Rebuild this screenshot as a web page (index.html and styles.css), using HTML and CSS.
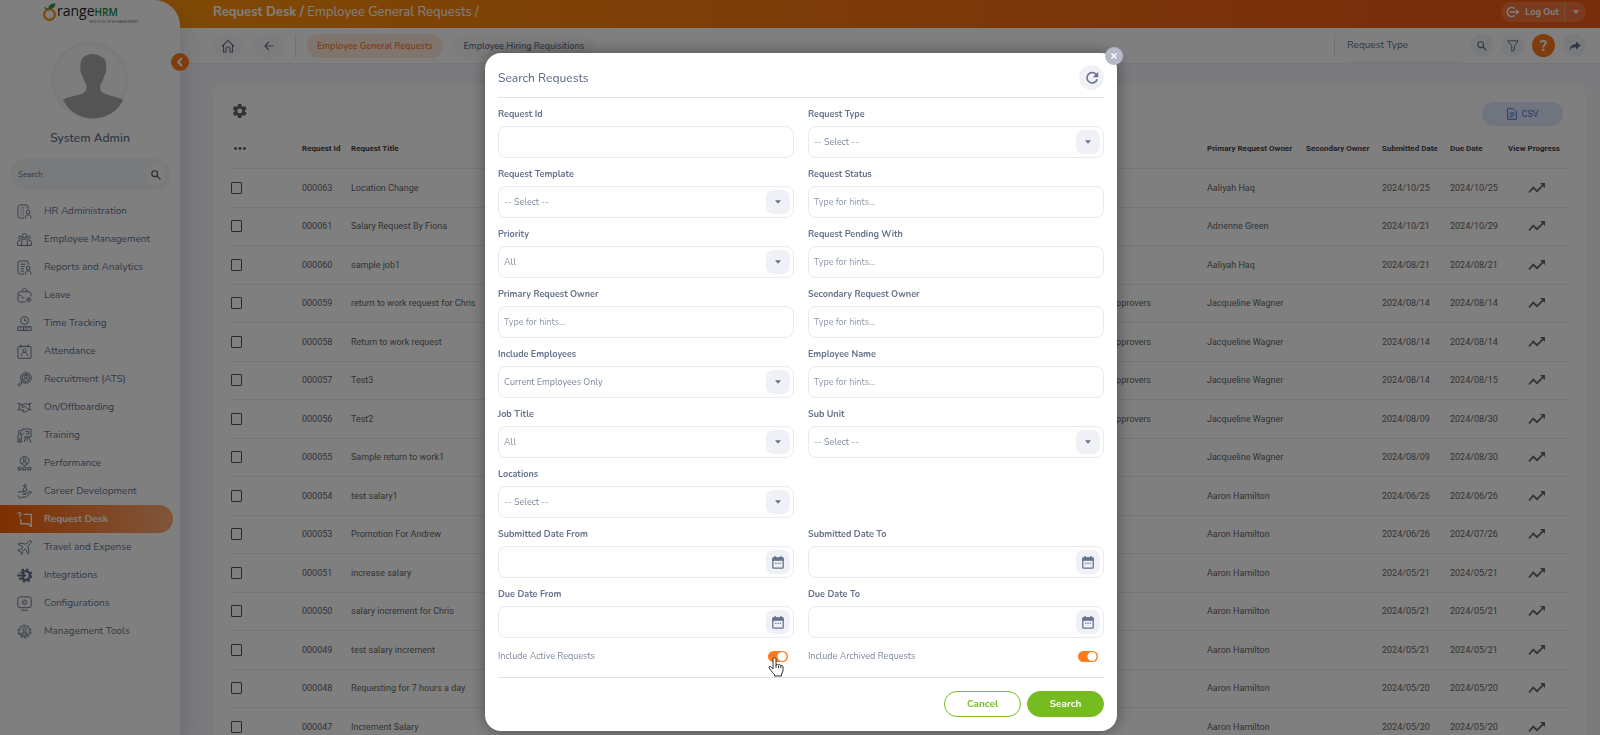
FILE: index.html
```html
<!DOCTYPE html>
<html lang="en">
<head>
<meta charset="utf-8">
<title>Request Desk - Employee General Requests</title>
<link rel="stylesheet" href="styles.css">
</head>
<body>
<svg class="defs" aria-hidden="true">
  <symbol id="trend" viewBox="0 0 18 12"><path d="M1 10.5 5.2 5.6 9 9.2 15.500 2.600" fill="none" stroke="currentColor" stroke-width="1.700"/><path d="M12 1h5v5l-1.600-1.600-1.800-1.800z" fill="currentColor"/></symbol>
  <symbol id="caret" viewBox="0 0 6 4"><path d="M0 .3h6L3 3.700z" fill="currentColor"/></symbol>
  <symbol id="search" viewBox="0 0 10 10"><circle cx="3.700" cy="3.700" r="2.900" fill="none" stroke="currentColor" stroke-width="1.100"/><path d="M5.900 5.900 9.400 9.400" stroke="currentColor" stroke-width="1.300"/></symbol>
  <symbol id="calendar" viewBox="0 0 12 13"><path d="M3 0v3M9 0v3" stroke="currentColor" stroke-width="1.400"/><rect x=".8" y="1.900" width="10.400" height="10.300" rx="1" fill="none" stroke="currentColor" stroke-width="1.300"/><path d="M.5 1.500h11v3.300H.5z" fill="currentColor"/><path d="M3 7.200h1.500M5.300 7.200h1.500M7.600 7.200h1.500" stroke="currentColor" stroke-width="1.100"/></symbol>
</svg>

<div class="app">
  <aside class="sidebar">
    <a class="logo" href="#" aria-label="OrangeHRM">
      <svg class="logo-mark" viewBox="0 0 15 18" aria-hidden="true"><circle cx="7.500" cy="11.500" r="5.400" fill="none" stroke="#ff8f0a" stroke-width="2.200"/><path d="M6.500 6.500C6 2 9 .5 13.500.3 13.500 4 11 6 6.500 6.500z" fill="#2f9e41"/><path d="M6.800 6.500C5.500 5.500 3.500 4.200 2 4c.7 2 2.500 2.700 4.800 2.500z" fill="#2f9e41"/></svg>
      <span class="logo-words"><span class="logo-name">range<b>HRM</b></span><span class="logo-tag">NEW LEVEL OF HR MANAGEMENT</span></span>
    </a>
    <div class="avatar"><svg viewBox="0 0 60 66" aria-hidden="true"><path d="M30 1C21 1 17 6 17.500 14c-1 2 .2 6 1.700 8 .8 4 2.500 7 4.300 10 .7 4-1 7-4 8.500C13 43 4 44 0 46.500 5 58 17 65.500 30 65.500S55 58 60 47c-4-3-14-4-19.500-7-3-1.500-4-4-3-8.500 2-3 3.500-6 4-9.500 1.500-2 2.500-6 1.500-8C43.500 8 42 5 38.500 4 36 2 33 1 30 1z" fill="#a8a8a8"/></svg></div>
    <div class="user-name">System Admin</div>
    <form class="side-search">
      <input type="text" placeholder="Search" aria-label="Search menu">
      <button type="button" aria-label="Search"><svg class="i10"><use href="#search"/></svg></button>
    </form>
    <nav class="menu">
      <a href="#"><svg viewBox="0 0 16 16"><path d="M7.500 15H3.500Q1 15 1 12.500v-9Q1 1 3.500 1h6Q12 1 12 3.500V5"/><path d="M4 4h1M6.500 4h1M9 4h1M4 6.500h1M6.500 6.500h1M4 9h1M6.500 9h1M4 11.500h1M6.500 11.500h1"/><circle cx="12" cy="8.500" r="2"/><path d="M9 15.500c0-3 1-4 3-4s3 1 3 4"/></svg>HR Administration</a>
      <a href="#"><svg viewBox="0 0 16 16"><circle cx="8" cy="4" r="2.200"/><circle cx="3.500" cy="6" r="1.700"/><circle cx="12.500" cy="6" r="1.700"/><path d="M5 14.500V9.500Q5 7.500 8 7.500t3 2v5M.7 14.500V10.500Q.7 9 3.500 9M15.300 14.500V10.500Q15.300 9 12.500 9M.7 14.300h14.600"/></svg>Employee Management</a>
      <a href="#"><svg viewBox="0 0 16 16"><path d="M7.500 15H3.500Q1 15 1 12.500v-9Q1 1 3.500 1h6Q12 1 12 3.500V5M4 4.500h5M4 7h4M4 9.500h3.500M4 12h3"/><circle cx="12" cy="8.500" r="2"/><path d="M9 15.500c0-3 1-4 3-4s3 1 3 4"/></svg>Reports and Analytics</a>
      <a href="#"><svg viewBox="0 0 16 16"><path d="M9 15H3.500Q1 15 1 12.500v-6Q1 4 3.500 4h9Q15 4 15 6.500V9M5.500 3.500C5.500 1 6.500.7 8 .7s2.500.3 2.500 2.800M2 7l2.500 1.500M4.500 9.500q1.500 2 3.500.5"/><circle cx="12.500" cy="12.500" r="2.300" stroke-dasharray="1.600 .5"/><circle cx="12.500" cy="12.500" r="1.200"/></svg>Leave</a>
      <a href="#"><svg viewBox="0 0 16 16"><circle cx="8" cy="4.800" r="4.200"/><path d="M8 2.500V5h2M.8 11.500h14.400v4H.8zM4 11.500v2M7 11.500v4M9.500 11.500v4M12.500 11.500v2"/></svg>Time Tracking</a>
      <a href="#"><svg viewBox="0 0 16 16"><rect x="1" y="2.500" width="14" height="12.800" rx="1"/><path d="M4 .5v3.500M12 .5v3.500M7 2.500h2M4.500 13c0-3 1.500-4 3.500-4s3.500 1 3.500 4"/><circle cx="8" cy="7" r="1.800"/></svg>Attendance</a>
      <a href="#"><svg viewBox="0 0 16 16"><circle cx="9.500" cy="6.300" r="5.700"/><circle cx="9.500" cy="6.300" r="4"/><circle cx="9.500" cy="5" r="1.500"/><path d="M6.800 9q.5-2 2.700-2t2.700 2M5 10l1 1L2.500 15.200.8 13.800z"/></svg>Recruitment (ATS)</a>
      <a href="#"><svg viewBox="0 0 16 16"><path d="M.5 3.500h2v7h-2M15.500 3.500h-2v7h2M2.500 4.500 6 5l2-1 3 .5 2.500-.5M6.500 5 5 7.500q1.500 1 3-.8L12 10M2.500 9.500 7.500 13q1 .5 1.500-.5l2-.7 2.500-2.300M6 10l2 1.500"/></svg>On/Offboarding</a>
      <a href="#"><svg viewBox="0 0 16 16"><path d="M6 3V1h9v8.500H7.500M8.500 3.500h4v3h-3M9.500 9.500 7.500 15M12.500 9.500l2.500 6M11 9.500V14"/><circle cx="3" cy="4" r="1.700"/><path d="M1 15V8q0-1.500 2-1.500L6 7l2-2M4.700 8v7H3v-4M.8 15h2"/></svg>Training</a>
      <a href="#"><svg viewBox="0 0 16 16"><circle cx="8" cy="5.300" r="4.700"/><circle cx="8" cy="4" r="1.500"/><path d="M5.500 8.500q.3-2.300 2.500-2.300t2.500 2.300M2.800 11.300l.7 1.200 1.500.2-1 1 .2 1.600-1.400-.7-1.400.7.200-1.600-1-1 1.500-.2zM8 11.300l.7 1.200 1.500.2-1 1 .2 1.600L8 14.600l-1.400.7.2-1.600-1-1 1.500-.2zM13.200 11.300l.7 1.200 1.500.2-1 1 .2 1.600-1.400-.7-1.400.7.200-1.600-1-1 1.500-.2z"/></svg>Performance</a>
      <a href="#"><svg viewBox="0 0 16 16"><circle cx="8.500" cy="2" r="1.400"/><path d="M6.500 7.500c0-3 .5-3.500 2-3.500s2 .5 2 3.500zM.7 8.500h2L5 8l4 2v1H6M9 10.500l5-2.500q1.500-.3 1.300 1L10 13.500q-2 1-5 .5l-2 1.300L.7 12"/></svg>Career Development</a>
      <a href="#" class="active" aria-current="page"><svg viewBox="0 0 16 16"><path d="M7 2.500h8.300v13L12 12.500H4V8" stroke-width="1.500"/><path d="M1 2Q1 .7 2.700.7T4.300 2.200Q4.300 3 3 3.800v1.400M3 6.300v1.200" stroke-width="1.300"/></svg>Request Desk</a>
      <a href="#"><svg viewBox="0 0 16 16"><path d="M15 1q-1.500-.7-3 .8L9.500 4.500 2.500 3 1 4.300l5.500 3.200L4 10.300 1.500 10l-1 1 3 1.500 1.500 3 1-1-.3-2.500L8.500 9.500l3.200 5.500L13 13.500 11.500 6.500 14.200 4Q15.700 2.500 15 1z"/></svg>Travel and Expense</a>
      <a href="#"><svg viewBox="0 0 16 16"><circle cx="9" cy="8" r="4.700" stroke-width="2.600"/><circle cx="9" cy="8" r="6.600" stroke-width="2" stroke-dasharray="2.600 2.584"/><path d="M0 8h7.500" stroke="#fff" stroke-width="4.500"/><path d="M0 8h8M5.500 5 8.500 8l-3 3" stroke-width="2"/></svg>Integrations</a>
      <a href="#"><svg viewBox="0 0 16 16"><rect x=".8" y="1" width="14.400" height="11.500" rx="2.500"/><path d="M4.500 15.200h7"/><circle cx="8" cy="6.800" r="1.800"/><circle cx="8" cy="6.800" r="2.800" stroke-dasharray="1.200 1.732"/></svg>Configurations</a>
      <a href="#"><svg viewBox="0 0 16 16"><circle cx="8" cy="8" r="7" stroke-dasharray="3 1.400"/><circle cx="8" cy="8" r="5.500"/><circle cx="8" cy="6.500" r="1.800"/><path d="M4.500 11.500q0-2.500 3.500-2.500t3.500 2.500z"/></svg>Management Tools</a>
    </nav>
    <button class="collapse" type="button" aria-label="Collapse menu"><svg viewBox="0 0 8 10" aria-hidden="true"><path d="M5.800 1 2.200 5l3.600 4" fill="none" stroke="#fff" stroke-width="2"/></svg></button>
  </aside>

  <div class="main">
    <header class="topbar">
      <h1><b>Request Desk /</b> Employee General Requests /</h1>
      <div class="logout">
        <button type="button" class="logout-main"><svg viewBox="0 0 15 12" aria-hidden="true"><path d="M9.700 2.600A4.500 4.500 0 1 0 9.700 9.400M4.500 6h8" fill="none" stroke="#fff" stroke-width="1.600"/><path d="M11 3l3.500 3L11 9z" fill="#fff"/></svg>Log Out</button>
        <button type="button" class="logout-more" aria-label="More"><svg class="caret"><use href="#caret"/></svg></button>
      </div>
    </header>

    <div class="toolbar">
      <button type="button" class="pill" aria-label="Home"><svg class="i14" viewBox="0 0 14 14" aria-hidden="true"><path d="M1 7.500 7 1.200l6 6.300M2.500 6.500V13H5V9.500Q5 8 7 8t2 1.500V13h2.500V6.500" fill="none" stroke="currentColor" stroke-width="1.100"/></svg></button>
      <button type="button" class="pill" aria-label="Back"><svg class="i10" viewBox="0 0 10 10" aria-hidden="true"><path d="M9.500 5H1M4.800 1 1 5l3.800 4" fill="none" stroke="currentColor" stroke-width="1.200"/></svg></button>
      <span class="rule"></span>
      <a href="#" class="tab current">Employee General Requests</a>
      <a href="#" class="tab">Employee Hiring Requisitions</a>
      <div class="tools">
        <span class="rule"></span>
        <input class="quick" type="text" placeholder="Request Type" aria-label="Request Type quick filter">
        <button type="button" class="round" aria-label="Search"><svg class="i10"><use href="#search"/></svg></button>
        <button type="button" class="round" aria-label="Filter"><svg class="i12" viewBox="0 0 12 12" aria-hidden="true"><path d="M.8.8h10.400L7.500 5.800V10L4.800 11.500V5.800z" fill="none" stroke="currentColor"/></svg></button>
        <button type="button" class="round help" aria-label="Help">?</button>
        <button type="button" class="round" aria-label="Share"><svg class="i12" viewBox="0 0 12 12" aria-hidden="true"><path d="M7 1.500 11.700 5.500 7 9.500V7.200Q2.500 7 .5 10.500.8 4.500 7 4z" fill="currentColor"/></svg></button>
      </div>
    </div>

    <section class="card">
      <div class="card-head">
        <button type="button" class="gear" aria-label="Table settings"><svg viewBox="0 0 24 24" aria-hidden="true"><path d="M19.400 13a7.500 7.500 0 0 0 0-2l2.300-1.700a.6.6 0 0 0 .1-.7l-2.100-3.700a.6.6 0 0 0-.7-.2l-2.600 1a8 8 0 0 0-1.800-1L14.200 1.900a.6.6 0 0 0-.5-.4H9.500a.6.6 0 0 0-.5.4l-.4 2.800a8 8 0 0 0-1.800 1l-2.600-1a.6.6 0 0 0-.7.200L1.400 8.600a.5.5 0 0 0 .1.700L3.800 11a7.500 7.500 0 0 0 0 2l-2.300 1.700a.6.6 0 0 0-.1.700l2.100 3.700c.1.200.4.300.7.200l2.600-1a8 8 0 0 0 1.800 1l.4 2.800c0 .2.200.4.500.4h4.200c.3 0 .5-.2.500-.4l.4-2.800a8 8 0 0 0 1.800-1l2.600 1c.3.100.5 0 .7-.2l2.100-3.700a.5.5 0 0 0-.1-.7zM11.600 15.600a3.600 3.600 0 1 1 0-7.200 3.600 3.600 0 0 1 0 7.200z" fill="currentColor"/></svg></button>
        <button type="button" class="csv"><svg viewBox="0 0 10 12" aria-hidden="true"><path d="M.6.6h5.700l3 3v7.800H.6zM2.500 5h5M2.500 7h5M2.500 9h3.500" fill="none" stroke="currentColor"/></svg>CSV</button>
      </div>
      <table>
        <colgroup><col class="c-check"><col class="c-id"><col class="c-title"><col><col class="c-owner"><col class="c-second"><col class="c-sub"><col class="c-due"><col class="c-view"></colgroup>
        <thead><tr><th><svg class="dots" viewBox="0 0 12 3" aria-label="Options"><circle cx="1.500" cy="1.500" r="1.400"/><circle cx="6" cy="1.500" r="1.400"/><circle cx="10.500" cy="1.500" r="1.400"/></svg></th><th>Request Id</th><th>Request Title</th><th></th><th>Primary Request Owner</th><th>Secondary Owner</th><th>Submitted Date</th><th>Due Date</th><th>View Progress</th></tr></thead>
        <tbody>
          <tr><td><input type="checkbox" aria-label="Select 000063"></td><td>000063</td><td>Location Change</td><td></td><td>Aaliyah Haq</td><td></td><td>2024/10/25</td><td>2024/10/25</td><td><svg class="trend"><use href="#trend"/></svg></td></tr>
          <tr><td><input type="checkbox" aria-label="Select 000061"></td><td>000061</td><td>Salary Request By Fiona</td><td></td><td>Adrienne Green</td><td></td><td>2024/10/21</td><td>2024/10/29</td><td><svg class="trend"><use href="#trend"/></svg></td></tr>
          <tr><td><input type="checkbox" aria-label="Select 000060"></td><td>000060</td><td>sample job1</td><td></td><td>Aaliyah Haq</td><td></td><td>2024/08/21</td><td>2024/08/21</td><td><svg class="trend"><use href="#trend"/></svg></td></tr>
          <tr><td><input type="checkbox" aria-label="Select 000059"></td><td>000059</td><td>return to work request for Chris</td><td>Approvers</td><td>Jacqueline Wagner</td><td></td><td>2024/08/14</td><td>2024/08/14</td><td><svg class="trend"><use href="#trend"/></svg></td></tr>
          <tr><td><input type="checkbox" aria-label="Select 000058"></td><td>000058</td><td>Return to work request</td><td>Approvers</td><td>Jacqueline Wagner</td><td></td><td>2024/08/14</td><td>2024/08/14</td><td><svg class="trend"><use href="#trend"/></svg></td></tr>
          <tr><td><input type="checkbox" aria-label="Select 000057"></td><td>000057</td><td>Test3</td><td>Approvers</td><td>Jacqueline Wagner</td><td></td><td>2024/08/14</td><td>2024/08/15</td><td><svg class="trend"><use href="#trend"/></svg></td></tr>
          <tr><td><input type="checkbox" aria-label="Select 000056"></td><td>000056</td><td>Test2</td><td>Approvers</td><td>Jacqueline Wagner</td><td></td><td>2024/08/09</td><td>2024/08/30</td><td><svg class="trend"><use href="#trend"/></svg></td></tr>
          <tr><td><input type="checkbox" aria-label="Select 000055"></td><td>000055</td><td>Sample return to work1</td><td></td><td>Jacqueline Wagner</td><td></td><td>2024/08/09</td><td>2024/08/30</td><td><svg class="trend"><use href="#trend"/></svg></td></tr>
          <tr><td><input type="checkbox" aria-label="Select 000054"></td><td>000054</td><td>test salary1</td><td></td><td>Aaron Hamilton</td><td></td><td>2024/06/26</td><td>2024/06/26</td><td><svg class="trend"><use href="#trend"/></svg></td></tr>
          <tr><td><input type="checkbox" aria-label="Select 000053"></td><td>000053</td><td>Promotion For Andrew</td><td></td><td>Aaron Hamilton</td><td></td><td>2024/06/26</td><td>2024/07/26</td><td><svg class="trend"><use href="#trend"/></svg></td></tr>
          <tr><td><input type="checkbox" aria-label="Select 000051"></td><td>000051</td><td>increase salary</td><td></td><td>Aaron Hamilton</td><td></td><td>2024/05/21</td><td>2024/05/21</td><td><svg class="trend"><use href="#trend"/></svg></td></tr>
          <tr><td><input type="checkbox" aria-label="Select 000050"></td><td>000050</td><td>salary increment for Chris</td><td></td><td>Aaron Hamilton</td><td></td><td>2024/05/21</td><td>2024/05/21</td><td><svg class="trend"><use href="#trend"/></svg></td></tr>
          <tr><td><input type="checkbox" aria-label="Select 000049"></td><td>000049</td><td>test salary increment</td><td></td><td>Aaron Hamilton</td><td></td><td>2024/05/21</td><td>2024/05/21</td><td><svg class="trend"><use href="#trend"/></svg></td></tr>
          <tr><td><input type="checkbox" aria-label="Select 000048"></td><td>000048</td><td>Requesting for 7 hours a day</td><td></td><td>Aaron Hamilton</td><td></td><td>2024/05/20</td><td>2024/05/20</td><td><svg class="trend"><use href="#trend"/></svg></td></tr>
          <tr><td><input type="checkbox" aria-label="Select 000047"></td><td>000047</td><td>Increment Salary</td><td></td><td>Aaron Hamilton</td><td></td><td>2024/05/20</td><td>2024/05/20</td><td><svg class="trend"><use href="#trend"/></svg></td></tr>
        </tbody>
      </table>
    </section>
  </div>
</div>

<div class="overlay">
  <form class="dialog" role="dialog" aria-labelledby="dialog-title">
    <button type="button" class="close" aria-label="Close"><svg viewBox="0 0 6 6" aria-hidden="true"><path d="M.5.5l5 5M5.500.5l-5 5" stroke="#fff" stroke-width="1.400"/></svg></button>
    <div class="dialog-head">
      <h2 id="dialog-title">Search Requests</h2>
      <button type="button" class="reset" aria-label="Reset"><svg viewBox="0 0 14 14" aria-hidden="true"><path d="M11.200 3.400A5.200 5.200 0 1 0 12.200 8.200" fill="none" stroke="currentColor" stroke-width="1.600"/><path d="M13.200.8v5.400H7.800z" fill="currentColor"/></svg></button>
    </div>
    <div class="fields">
      <div class="field"><label for="rid">Request Id</label><div class="control"><input id="rid" type="text"></div></div>
      <div class="field"><label for="rtype">Request Type</label><div class="control"><select id="rtype"><option>-- Select --</option></select><span class="tile"><svg class="caret"><use href="#caret"/></svg></span></div></div>
      <div class="field"><label for="rtemplate">Request Template</label><div class="control"><select id="rtemplate"><option>-- Select --</option></select><span class="tile"><svg class="caret"><use href="#caret"/></svg></span></div></div>
      <div class="field"><label for="rstatus">Request Status</label><div class="control"><input id="rstatus" type="text" placeholder="Type for hints..."></div></div>
      <div class="field"><label for="priority">Priority</label><div class="control"><select id="priority"><option>All</option></select><span class="tile"><svg class="caret"><use href="#caret"/></svg></span></div></div>
      <div class="field"><label for="pending">Request Pending With</label><div class="control"><input id="pending" type="text" placeholder="Type for hints..."></div></div>
      <div class="field"><label for="powner">Primary Request Owner</label><div class="control"><input id="powner" type="text" placeholder="Type for hints..."></div></div>
      <div class="field"><label for="sowner">Secondary Request Owner</label><div class="control"><input id="sowner" type="text" placeholder="Type for hints..."></div></div>
      <div class="field"><label for="include">Include Employees</label><div class="control"><select id="include"><option>Current Employees Only</option></select><span class="tile"><svg class="caret"><use href="#caret"/></svg></span></div></div>
      <div class="field"><label for="ename">Employee Name</label><div class="control"><input id="ename" type="text" placeholder="Type for hints..."></div></div>
      <div class="field"><label for="job">Job Title</label><div class="control"><select id="job"><option>All</option></select><span class="tile"><svg class="caret"><use href="#caret"/></svg></span></div></div>
      <div class="field"><label for="unit">Sub Unit</label><div class="control"><select id="unit"><option>-- Select --</option></select><span class="tile"><svg class="caret"><use href="#caret"/></svg></span></div></div>
      <div class="field first"><label for="loc">Locations</label><div class="control"><select id="loc"><option>-- Select --</option></select><span class="tile"><svg class="caret"><use href="#caret"/></svg></span></div></div>
      <div class="field first"><label for="sfrom">Submitted Date From</label><div class="control"><input id="sfrom" type="text"><button type="button" class="tile" aria-label="Pick date"><svg class="cal"><use href="#calendar"/></svg></button></div></div>
      <div class="field"><label for="sto">Submitted Date To</label><div class="control"><input id="sto" type="text"><button type="button" class="tile" aria-label="Pick date"><svg class="cal"><use href="#calendar"/></svg></button></div></div>
      <div class="field"><label for="dfrom">Due Date From</label><div class="control"><input id="dfrom" type="text"><button type="button" class="tile" aria-label="Pick date"><svg class="cal"><use href="#calendar"/></svg></button></div></div>
      <div class="field"><label for="dto">Due Date To</label><div class="control"><input id="dto" type="text"><button type="button" class="tile" aria-label="Pick date"><svg class="cal"><use href="#calendar"/></svg></button></div></div>
      <div class="toggle"><label for="active">Include Active Requests</label><input id="active" type="checkbox" checked>
        <svg class="pointer" viewBox="0 0 16 20" aria-hidden="true"><path d="M5 12V2.200a1.500 1.500 0 0 1 3 0V8q1.200-1.200 2.500 0 1.300-.8 2.300.4 1.900-.5 2.200 1.200V13q0 2-1.500 4v2H6.500v-1.500Q4.500 16 3 13.500L1 10.800Q.8 9.300 2.300 9.500z" fill="#fff" stroke="#333" stroke-width="1"/><path d="M8 8v3M10.500 8.500v2.500M12.800 9v2" stroke="#333"/></svg></div>
      <div class="toggle"><label for="archived">Include Archived Requests</label><input id="archived" type="checkbox" checked></div>
    </div>
    <div class="actions">
      <button type="button" class="btn cancel">Cancel</button>
      <button type="submit" class="btn submit">Search</button>
    </div>
  </form>
</div>
</body>
</html>
```

FILE: styles.css
```css
* { box-sizing: border-box; }
body { margin: 0; height: 100vh; overflow: hidden; background: #f6f6fb; color: #64728c; font-family: "Nunito", "Lato", "Open Sans", sans-serif; font-size: 10px; }
button, input, select { font: inherit; color: inherit; border: 0; padding: 0; margin: 0; background: none; }
button { display: flex; align-items: center; justify-content: center; }
a { color: inherit; text-decoration: none; }
h1, h2 { margin: 0; font-weight: 400; }
.defs { position: absolute; width: 0; height: 0; }
.i10 { width: 10px; height: 10px; }
.i12 { width: 12px; height: 12px; }
.i14 { width: 14px; height: 14px; }
.caret { width: 6px; height: 4px; }

.app { display: flex; height: 100vh; background: linear-gradient(90deg, #ff920b 12%, #f35c17 90%) top / 100% 28px no-repeat; }

/* Sidebar */
.sidebar { position: relative; z-index: 1; flex: 0 0 180px; background: #fff; border-radius: 0 26px 0 0; box-shadow: 4px 8px 24px rgba(70, 70, 100, .16); }
.logo { display: flex; width: 96px; height: 24px; margin: 3px auto 0; }
.logo-mark { width: 15px; height: 18px; }
.logo-words { flex: 1; display: flex; flex-direction: column; align-items: flex-end; }
.logo-name { font: 14px/16px "Open Sans", sans-serif; color: #222; align-self: flex-start; }
.logo-name b { font-size: 10px; font-weight: 600; color: #148a3c; }
.logo-tag { font-size: 3px; line-height: 4px; color: #555; white-space: nowrap; }
.avatar { width: 78px; height: 78px; margin: 14px auto 0; padding: 8px; border: 4px solid #f2f4f8; border-radius: 50%; background: #fbfbfc; display: grid; place-items: center; }
.avatar svg { width: 60px; height: 66px; }
.user-name { margin-top: 10px; font-size: 12px; line-height: 18px; font-weight: 600; text-align: center; }
.side-search { display: flex; align-items: center; height: 31px; margin: 12px 9px 0 10px; padding: 0 5px 0 8px; border-radius: 16px; background: #f2f4f8; font-size: 8px; }
.side-search input { flex: 1; min-width: 0; }
.side-search button { width: 21px; height: 21px; border-radius: 50%; background: #fbfbfc; color: #555; }
.menu { margin: 7px 7px 0 0; }
.menu a { display: flex; align-items: center; gap: 12px; height: 28px; padding-left: 17px; border-radius: 0 14px 14px 0; }
.menu svg { width: 15px; height: 15px; fill: none; stroke: currentColor; stroke-width: 1; }
.menu .active { color: #fff; font-weight: 700; background: linear-gradient(90deg, #ff5f00, #ffac76); }
.collapse { position: absolute; right: -9px; top: 53px; width: 18px; height: 18px; border-radius: 50%; background: #ff7b1d; }
.collapse svg { width: 8px; height: 10px; }

/* Header */
.main { flex: 1; min-width: 0; display: flex; flex-direction: column; }
.topbar { display: flex; flex: none; align-items: center; justify-content: space-between; height: 28px; padding: 0 14px 4px 33px; color: #fff; }
h1 { font-size: 13px; line-height: 18px; }
.logout { display: flex; height: 20px; border-radius: 10px; background: rgba(255, 255, 255, .16); font-size: 9px; font-weight: 700; }
.logout-main { gap: 5px; padding: 0 5px 0 4px; }
.logout-main svg { width: 15px; height: 12px; }
.logout-more { width: 22px; border-left: 1px solid rgba(255, 255, 255, .3); }
.toolbar { display: flex; flex: none; align-items: center; gap: 11px; height: 36px; padding: 0 14px 0 33px; background: #fff; border-bottom: 1px solid #ececf2; }
.pill { width: 30px; height: 24px; border-radius: 12px; background: #f8f8fa; }
.rule { width: 1px; height: 24px; background: #e2e2e6; }
.tab { height: 24px; padding: 0 10px; border-radius: 12px; background: #f8f8fa; font-size: 9px; font-weight: 600; line-height: 24px; }
.tab.current { background: #ffebdc; color: #ff7b1d; }
.tools { display: flex; align-items: center; gap: 8px; margin-left: auto; }
.quick { width: 115px; height: 32px; margin-left: 4px; border-bottom: 1px solid #eee; }
.round { width: 23px; height: 23px; border-radius: 50%; background: #f2f4f8; }
.round.help { background: #ff7b1d; color: #fff; font-size: 16px; font-weight: 700; }

/* Table */
.card { flex: 1; min-height: 0; overflow: hidden; margin: 20px 14px 0 33px; padding: 18px 18px 0; border-radius: 14px 14px 0 0; background: #fff; font-family: Roboto, sans-serif; }
.card-head { display: flex; align-items: flex-start; justify-content: space-between; padding-right: 5px; }
.gear { width: 17px; height: 17px; color: #666; }
.gear svg { width: 16px; height: 16px; }
.csv { gap: 5px; width: 81px; height: 24px; border-radius: 12px; background: #e0e8fc; color: #4a7be0; font-size: 9px; }
.csv svg { width: 10px; height: 12px; }
table { width: 100%; table-layout: fixed; border-collapse: collapse; font-size: 9px; color: #666; }
.c-check { width: 71px; }
.c-id { width: 49px; }
.c-title { width: 130px; }
.c-owner { width: 99px; }
.c-second { width: 76px; }
.c-sub { width: 68px; }
.c-due { width: 58px; }
.c-view { width: 60px; }
th, td { padding: 0; text-align: left; white-space: nowrap; font-weight: 400; border-bottom: 1px solid #ececf0; }
th { height: 42px; padding-top: 3px; color: #444; font-size: 8px; font-weight: 700; }
td { height: 39px; }
tr:nth-child(even) td { height: 38px; }
td:nth-child(4) { text-align: right; padding-right: 56px; }
td:nth-child(9) { padding-left: 20px; }
td input { display: block; appearance: none; width: 11px; height: 12px; border: 1px solid #555; border-radius: 1px; }
.dots { display: block; width: 12px; height: 3px; margin-left: 3px; fill: #555; }
.trend { display: block; width: 18px; height: 12px; color: #666; }

/* Dialog */
.overlay { position: fixed; inset: 0; z-index: 10; padding: 53px 0 0 2px; background: rgba(0, 0, 0, .5); }
.dialog { position: relative; width: 632px; max-width: 100%; margin: 0 auto; padding: 0 13px 14px; border-radius: 16px; background: #fff; box-shadow: 0 0 16px rgba(0, 0, 0, .4); }
.close { position: absolute; top: -6px; right: -6px; width: 18px; height: 18px; border-radius: 50%; background: #b4bac8; }
.close svg { width: 6px; height: 6px; }
.dialog-head { display: flex; align-items: center; justify-content: space-between; height: 45px; padding-top: 5px; border-bottom: 1px solid #dfe1e6; }
h2 { font-size: 12px; line-height: 18px; font-weight: 500; }
.reset { width: 25px; height: 25px; border-radius: 50%; background: #f0f1f4; }
.reset svg { width: 14px; height: 14px; }
.fields { display: grid; grid-template-columns: 1fr 1fr; gap: 8px 14px; padding: 8px 0 11px; border-bottom: 1px solid #dfe1e6; }
.field { display: flex; flex-direction: column; gap: 4px; }
.field.first { grid-column: 1; }
.field label { font-size: 9px; line-height: 16px; font-weight: 700; }
.control { position: relative; display: flex; height: 32px; border: 1px solid #e8e9ee; border-radius: 8px; font-size: 9px; }
.control input, .control select { flex: 1; min-width: 0; padding: 0 5px 1px; appearance: none; border-radius: 8px; }
.control select { color: #7d889c; }
::placeholder { color: inherit; opacity: 1; }
.control ::placeholder { color: #8f99ab; }
.tile { position: absolute; right: 3px; top: 3px; display: grid; place-items: center; width: 24px; height: 24px; border-radius: 7px; background: #f0f1f6; color: #64728c; }
span.tile { pointer-events: none; }
.cal { width: 12px; height: 13px; }
.toggle { position: relative; display: flex; align-items: center; justify-content: space-between; height: 20px; padding-right: 6px; font-size: 9px; color: #7d889c; }
.toggle input { appearance: none; width: 20px; height: 11px; border-radius: 6px; background: radial-gradient(circle at 14px 50%, #fff 4px, #ff7b1d 5px); }
.pointer { position: absolute; right: 10px; top: 11px; width: 16px; height: 20px; }
.actions { display: flex; justify-content: flex-end; gap: 6px; padding-top: 13px; }
.btn { width: 77px; height: 26px; border-radius: 13px; border: 1px solid #76bc21; font-weight: 700; color: #76bc21; }
.btn.submit { background: #76bc21; color: #fff; }
```
